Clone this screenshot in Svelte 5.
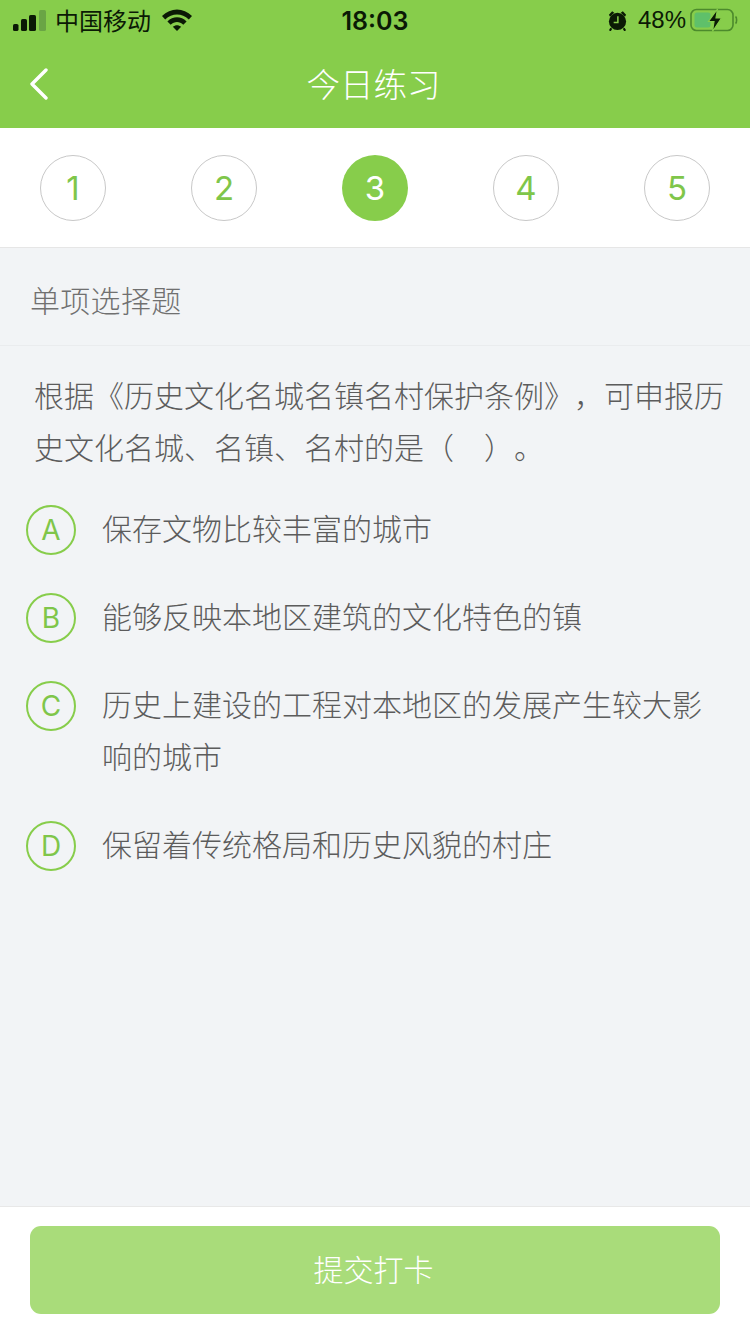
<script lang="ts">
  const steps = [1, 2, 3, 4, 5];
  const current = 3;
  const options = [
    { key: 'A', text: '保存文物比较丰富的城市' },
    { key: 'B', text: '能够反映本地区建筑的文化特色的镇' },
    { key: 'C', text: '历史上建设的工程对本地区的发展产生较大影响的城市' },
    { key: 'D', text: '保留着传统格局和历史风貌的村庄' },
  ];
</script>

<div class="page">
  <header class="head">
    <div class="status">
      <div class="status-left">
        <svg class="signal" width="33" height="21" viewBox="0 0 33 21" aria-hidden="true">
          <rect x="0" y="14" width="5.5" height="7" rx="1.6" fill="#0b1a05" />
          <rect x="8" y="9" width="6" height="12" rx="1.6" fill="#0b1a05" />
          <rect x="16" y="5" width="7" height="16" rx="1.6" fill="#0b1a05" />
          <rect x="26" y="0" width="7" height="21" rx="1.6" fill="#6aa545" />
        </svg>
        <span class="carrier">中国移动</span>
        <svg class="wifi" width="30" height="22" viewBox="0 0 30 22" aria-hidden="true">
          <path d="M0 7 C8.5 -1.8 21.5 -1.8 30 7 L26.8 10.4 C20 3.8 10 3.8 3.2 10.4 Z" fill="#0b1a05" />
          <path d="M5.4 12.4 C11 7 19 7 24.6 12.4 L21.3 15.8 C17.5 12.2 12.5 12.2 8.7 15.8 Z" fill="#0b1a05" />
          <path d="M10.8 17.8 C13.4 15.7 16.6 15.7 19.2 17.8 L15 22 Z" fill="#0b1a05" />
        </svg>
      </div>
      <span class="time">18:03</span>
      <div class="status-right">
        <svg class="alarm" width="21" height="21" viewBox="0 0 22 22" aria-hidden="true">
          <circle cx="11" cy="12" r="9" fill="#0b1a05" />
          <path d="M2 5 L5.4 1.4 L7.6 2.8 L3.2 7 Z M20 5 L16.6 1.4 L14.4 2.8 L18.8 7 Z" fill="#0b1a05" />
          <path d="M4.5 19 L3 21.8 M17.5 19 L19 21.8" stroke="#0b1a05" stroke-width="2.2" />
          <path d="M11.4 6.5 V13 H7" stroke="#87cd4b" stroke-width="1.6" fill="none" />
        </svg>
        <span class="percent">48%</span>
        <svg class="battery" width="48" height="24" viewBox="0 0 48 24" aria-hidden="true">
          <rect x="1" y="1.5" width="42" height="21" rx="5.5" fill="none" stroke="#4c8a2c" stroke-width="1.6" />
          <rect x="4.5" y="4.5" width="16" height="15" rx="2.5" fill="#5fc06a" />
          <path d="M45.5 8.5 C47 9.5 47 14.5 45.5 15.5" fill="none" stroke="#4c8a2c" stroke-width="1.6" />
          <path d="M27.5 1 L18.5 13.5 H24 L22.5 23.5 L31.5 10 H26 Z" fill="#0b1a05" stroke="#87cd4b" stroke-width="1.2" />
        </svg>
      </div>
    </div>
    <div class="nav">
      <svg class="back" width="20" height="32" viewBox="0 0 20 32" aria-hidden="true">
        <path d="M17 2 L3 16 L17 30" fill="none" stroke="#fff" stroke-width="3.4" stroke-linecap="round" stroke-linejoin="round" />
      </svg>
      <h1>今日练习</h1>
    </div>
  </header>

  <div class="steps">
    {#each steps as n}
      <span class="step" class:current={n === current}>{n}</span>
    {/each}
  </div>

  <main class="body">
    <div class="type">单项选择题</div>
    <p class="question">根据《历史文化名城名镇名村保护条例》，可申报历史文化名城、名镇、名村的是（　）。</p>
    <ul class="options">
      {#each options as opt (opt.key)}
        <li class="option">
          <span class="badge">{opt.key}</span>
          <span class="label">{opt.text}</span>
        </li>
      {/each}
    </ul>
  </main>

  <footer class="foot">
    <button class="submit" type="button">提交打卡</button>
  </footer>
</div>

<style>
  :global(body) {
    margin: 0;
  }

  .page {
    width: 750px;
    height: 1334px;
    display: flex;
    flex-direction: column;
    background: #f2f4f6;
    font-family: "Noto Sans CJK SC", "Liberation Sans", sans-serif;
    text-spacing-trim: space-all;
    overflow: hidden;
  }

  .head {
    height: 128px;
    flex: none;
    background: #87cd4b;
  }

  .status {
    height: 40px;
    padding: 0 12px 0 13px;
    display: flex;
    align-items: center;
    justify-content: space-between;
    position: relative;
    color: #0b1a05;
  }

  .status-left,
  .status-right {
    display: flex;
    align-items: center;
  }

  .carrier {
    margin-left: 9px;
    font-size: 24px;
    line-height: 40px;
  }

  .wifi {
    margin-left: 11px;
  }

  .time {
    position: absolute;
    left: 0;
    right: 0;
    top: 1px;
    text-align: center;
    font-family: Inter, "Liberation Sans", sans-serif;
    font-size: 25px;
    font-weight: 600;
    line-height: 40px;
  }

  .percent {
    margin-left: 10px;
    margin-right: 4px;
    font-family: "Liberation Sans", sans-serif;
    font-size: 24px;
    line-height: 42px;
  }

  .nav {
    height: 88px;
    display: flex;
    align-items: center;
    justify-content: center;
    position: relative;
  }

  .back {
    position: absolute;
    left: 29px;
    top: 28px;
  }

  h1 {
    margin: 0 3px 4px 0;
    font-size: 33.5px;
    font-weight: 300;
    color: #fff;
  }

  .steps {
    height: 120px;
    flex: none;
    box-sizing: border-box;
    padding: 0 40px;
    display: flex;
    align-items: center;
    justify-content: space-between;
    background: #fff;
    border-bottom: 1px solid #e6e6e6;
  }

  .step {
    width: 66px;
    height: 66px;
    box-sizing: border-box;
    border: 1px solid #c8c8c8;
    border-radius: 50%;
    display: flex;
    align-items: center;
    justify-content: center;
    font-family: Inter, "Liberation Sans", sans-serif;
    font-size: 33px;
    font-weight: 400;
    color: #7fc64a;
  }

  .step.current {
    border: 0;
    background: #87cd4b;
    color: #fff;
  }

  .body {
    flex: 1;
  }

  .type {
    height: 98px;
    box-sizing: border-box;
    padding: 4px 30px 0;
    display: flex;
    align-items: center;
    font-size: 30px;
    font-weight: 300;
    letter-spacing: 0.3px;
    color: #707070;
    border-bottom: 1px solid #eaecee;
  }

  .question {
    margin: 0;
    padding: 22px 20px 0 34px;
    font-size: 30px;
    line-height: 52px;
    font-weight: 300;
    color: #5c5c5c;
  }

  .options {
    list-style: none;
    margin: 0;
    padding: 29px 48px 0 26px;
  }

  .option {
    display: flex;
    gap: 26px;
    margin-bottom: 36px;
  }

  .badge {
    flex: none;
    width: 50px;
    height: 50px;
    margin: 4px 0 -4px;
    box-sizing: border-box;
    border: 2px solid #87cd4b;
    border-radius: 50%;
    display: flex;
    align-items: center;
    justify-content: center;
    font-family: Inter, "Liberation Sans", sans-serif;
    font-size: 28px;
    font-weight: 400;
    color: #7fc64a;
  }

  .label {
    font-size: 30px;
    line-height: 52px;
    font-weight: 300;
    color: #5c5c5c;
  }

  .foot {
    height: 128px;
    flex: none;
    box-sizing: border-box;
    padding: 19px 30px;
    background: #fff;
    border-top: 1px solid #e8e8e8;
  }

  .submit {
    display: block;
    width: 690px;
    height: 88px;
    padding: 0 3px 4px 0;
    border: 0;
    border-radius: 11px;
    background: #a9dc7a;
    color: #fff;
    font-family: inherit;
    font-size: 30px;
    font-weight: 300;
  }
</style>
